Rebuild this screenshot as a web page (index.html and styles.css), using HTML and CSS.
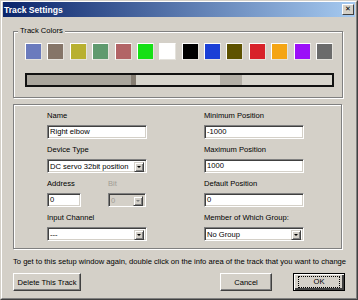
FILE: index.html
```html
<!DOCTYPE html>
<html lang="en">
<head>
    <meta charset="UTF-8">
    <title>Track Settings</title>
    <link rel="stylesheet" href="styles.css">
</head>
<body>
<div class="window">
  <div class="frame">
    <div class="titlebar">
        <span class="title">Track Settings</span>
        <span class="close">&#x2715;</span>
    </div>

    <div class="content">
        <fieldset class="colors">
            <legend>Track Colors</legend>
            <div class="swatches">
                <span class="swatch" style="background:#6b7bbd"></span>
                <span class="swatch" style="background:#857568"></span>
                <span class="swatch" style="background:#b8b030"></span>
                <span class="swatch" style="background:#5f9a6e"></span>
                <span class="swatch" style="background:#b26466"></span>
                <span class="swatch" style="background:#15e015"></span>
                <span class="swatch" style="background:#ffffff"></span>
                <span class="swatch" style="background:#000000"></span>
                <span class="swatch" style="background:#1a3fd6"></span>
                <span class="swatch" style="background:#5e5200"></span>
                <span class="swatch" style="background:#d8222a"></span>
                <span class="swatch" style="background:#f5a514"></span>
                <span class="swatch" style="background:#9b10f8"></span>
                <span class="swatch" style="background:#6b6b6b"></span>
            </div>
            <div class="slider">
                <span class="seg dark" style="width:104px"></span>
                <span class="seg thumb" style="width:5px"></span>
                <span class="seg light" style="width:84px"></span>
                <span class="seg mid" style="width:22px"></span>
                <span class="seg light rest"></span>
            </div>
        </fieldset>

        <div class="panel">
            <div class="field">
                <label>Name</label>
                <div class="input w100">Right elbow</div>
            </div>
            <div class="field">
                <label>Minimum Position</label>
                <div class="input w100">-1000</div>
            </div>

            <div class="field">
                <label>Device Type</label>
                <div class="select w100"><span class="val">DC servo 32bit position</span><span class="drop"></span></div>
            </div>
            <div class="field">
                <label>Maximum Position</label>
                <div class="input w100">1000</div>
            </div>

            <div class="field pair">
                <div>
                    <label>Address</label>
                    <div class="input w34">0</div>
                </div>
                <div class="disabled">
                    <label>Bit</label>
                    <div class="select w38"><span class="val">0</span><span class="drop"></span></div>
                </div>
            </div>
            <div class="field">
                <label>Default Position</label>
                <div class="input w100">0</div>
            </div>

            <div class="field">
                <label>Input Channel</label>
                <div class="select w100"><span class="val">---</span><span class="drop"></span></div>
            </div>
            <div class="field">
                <label>Member of Which Group:</label>
                <div class="select w100"><span class="val">No Group</span><span class="drop"></span></div>
            </div>
        </div>

        <p class="help">To get to this setup window again, double click on the info area of the track that you want to change</p>

        <div class="buttons">
            <button class="btn delete">Delete This Track</button>
            <button class="btn cancel">Cancel</button>
            <button class="btn ok"><span class="focus">OK</span></button>
        </div>
    </div>
  </div>
</div>
</body>
</html>
```

FILE: styles.css
```css
body {
    margin: 0;
    font-family: "Liberation Sans", Arial, sans-serif;
    font-size: 7.6px;
    color: #000;
    background: #d4d0c8;
}
.window {
    width: 358px;
    height: 300px;
    box-sizing: border-box;
    border: 1px solid;
    border-color: #d4d0c8 #404040 #404040 #d4d0c8;
    background: #d4d0c8;
}
.frame {
    height: 100%;
    box-sizing: border-box;
    border: 1px solid;
    border-color: #fff #808080 #808080 #fff;
    padding: 0 1px 1px 1px;
}
.titlebar {
    height: 15px;
    display: flex;
    align-items: center;
    justify-content: space-between;
    background: linear-gradient(to right, #0a246a, #a6caf0);
}
.title {
    color: #fff;
    font-weight: bold;
    font-size: 8.6px;
    padding-left: 1px;
}
.close {
    width: 10px;
    height: 9px;
    margin-right: 1px;
    background: #d4d0c8;
    border: 1px solid;
    border-color: #fff #404040 #404040 #fff;
    font-family: "DejaVu Sans", sans-serif;
    font-size: 7px;
    font-weight: bold;
    line-height: 9px;
    text-align: center;
}
.content {
    padding: 0 10px;
}

/* Track colors */
.colors {
    width: 330px;
    box-sizing: border-box;
    margin: 9px 0 0 0;
    padding: 0 4px 10px 4px;
    border: 1px solid #808080;
    box-shadow: inset 1px 1px 0 #fff, 1px 1px 0 #fff;
}
.colors legend {
    padding: 0 2px;
    line-height: 10px;
    background: #d4d0c8;
}
.swatches {
    display: flex;
    justify-content: space-between;
    margin: 7px 0 0 7px;
    width: 308px;
}
.swatch {
    width: 17px;
    height: 17px;
    box-sizing: border-box;
    border: 1px solid;
    border-color: #fff #e4e2dc #e4e2dc #fff;
}
.slider {
    display: flex;
    width: 309px;
    height: 14px;
    box-sizing: border-box;
    margin: 13px 0 0 7px;
    border: 2px solid #111;
}
.seg { height: 100%; }
.seg.dark { background: #a9a59c; }
.seg.thumb { background: #857d72; }
.seg.light { background: #d8d5cd; }
.seg.mid { background: #b3afa6; }
.seg.rest { flex: 1; }

/* settings panel */
.panel {
    width: 329px;
    height: 145px;
    box-sizing: border-box;
    margin-top: 6px;
    padding: 6px 0 0 33px;
    border: 1px solid #808080;
    box-shadow: inset 1px 1px 0 #fff, 1px 1px 0 #fff;
    display: grid;
    grid-template-columns: 157px 100px;
    grid-auto-rows: 28px;
    row-gap: 6px;
}
.field label {
    display: block;
    line-height: 10px;
    margin-bottom: 4px;
    white-space: nowrap;
}
.field.pair {
    display: flex;
    gap: 27px;
}
.disabled label {
    color: #a09c94;
}
.input, .select {
    height: 14px;
    box-sizing: border-box;
    border: 1px solid;
    border-color: #808080 #fff #fff #808080;
    box-shadow: inset 1px 1px 0 #404040, inset -1px -1px 0 #d4d0c8;
    background: #fff;
    line-height: 12px;
    padding-left: 2px;
    white-space: nowrap;
    overflow: hidden;
}
.w100 { width: 100px; }
.w34 { width: 34px; }
.w38 { width: 38px; }
.select {
    display: flex;
    justify-content: space-between;
    padding: 2px 2px 2px 2px;
    line-height: 10px;
}
.disabled .select {
    background: #d4d0c8;
    color: #a09c94;
}
.drop {
    width: 10px;
    height: 10px;
    box-sizing: border-box;
    flex-shrink: 0;
    background: #d4d0c8;
    border: 1px solid;
    border-color: #d4d0c8 #404040 #404040 #d4d0c8;
    box-shadow: inset 1px 1px 0 #fff, inset -1px -1px 0 #808080;
    position: relative;
}
.drop::after {
    content: "";
    position: absolute;
    left: 2px;
    top: 3px;
    border-left: 2px solid transparent;
    border-right: 2px solid transparent;
    border-top: 2px solid #000;
}
.disabled .drop::after {
    border-top-color: #808080;
}

.help {
    margin: 8px 0 0 0;
    line-height: 10px;
    white-space: nowrap;
}

.buttons {
    display: flex;
    margin-top: 6px;
}
.btn {
    height: 18px;
    box-sizing: border-box;
    font-family: inherit;
    font-size: inherit;
    white-space: nowrap;
    background: #d4d0c8;
    border: 1px solid;
    border-color: #fff #404040 #404040 #fff;
    box-shadow: inset -1px -1px 0 #808080;
    padding: 0;
}
.delete { width: 68px; }
.cancel { width: 52px; margin-left: auto; }
.ok {
    width: 52px;
    margin-left: 21px;
    border: 1px solid #000;
    box-shadow: inset 1px 1px 0 #fff, inset -2px -2px 0 #404040, inset -1px -1px 0 #808080;
    display: flex;
    align-items: center;
    justify-content: center;
}
.ok .focus {
    width: 40px;
    height: 10px;
    line-height: 10px;
    outline: 1px dotted #000;
}
```
